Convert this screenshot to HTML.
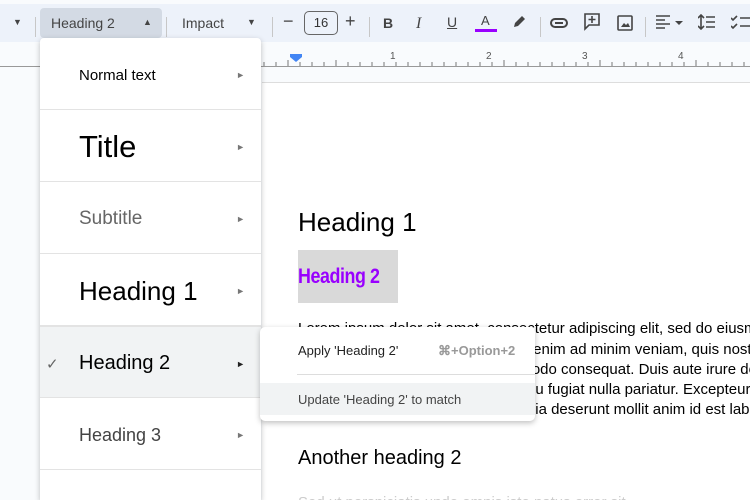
<!DOCTYPE html>
<html><head><meta charset="utf-8"><style>
*{margin:0;padding:0;box-sizing:border-box}
html,body{width:750px;height:500px;overflow:hidden}
body{background:#f9fbfd;font-family:"Liberation Sans",Arial,sans-serif;position:relative}
.abs{position:absolute}
.tb{left:0;top:4px;width:750px;height:38px;background:#edf2fa}
.page{left:262px;top:82px;width:488px;height:418px;background:#fff;border-top:1px solid #ddd;overflow:hidden}
.tbt{color:#444;font-size:14px}
.sep{width:1px;height:20px;background:#c7c7c7;top:13px}
.menu{left:40px;top:38px;width:221px;height:462px;background:#fff;box-shadow:0 2px 6px rgba(0,0,0,.25);border-radius:4px 4px 0 0;overflow:hidden}
.it{position:absolute;left:0;width:221px;height:72px;border-bottom:1px solid #e3e3e3;display:flex;align-items:center;padding-left:39px;padding-top:3px}
.arr{position:absolute;right:16px;font-size:9px;color:#777}
.sub{left:260px;top:327px;width:275px;height:94px;background:#fff;box-shadow:0 2px 6px rgba(0,0,0,.25);border-radius:5px}
.body{font-size:15px;color:#000;white-space:nowrap}
</style></head><body>
<div class="abs tb"></div>
<div class="abs tbt" style="left:13px;top:17px;font-size:9px">▼</div>
<div class="abs sep" style="left:35px;top:17px"></div>
<div class="abs" style="left:40px;top:8px;width:122px;height:30px;background:#d3dae4;border-radius:4px"></div>
<div class="abs tbt" style="left:51px;top:15px">Heading 2</div>
<div class="abs tbt" style="left:143px;top:17px;font-size:9px">▲</div>
<div class="abs sep" style="left:166px;top:17px"></div>
<div class="abs tbt" style="left:182px;top:15px">Impact</div>
<div class="abs tbt" style="left:247px;top:17px;font-size:9px">▼</div>
<div class="abs sep" style="left:272px;top:17px"></div>
<div class="abs tbt" style="left:283px;top:11px;font-size:18px">−</div>
<div class="abs" style="left:304px;top:11px;width:34px;height:24px;border:1px solid #666;border-radius:5px;font-size:13px;color:#333;text-align:center;line-height:22px">16</div>
<div class="abs tbt" style="left:345px;top:11px;font-size:18px">+</div>
<div class="abs sep" style="left:369px;top:17px"></div>
<div class="abs tbt" style="left:383px;top:15px;font-weight:bold">B</div>
<div class="abs tbt" style="left:416px;top:15px;font-style:italic;font-family:'Liberation Serif';font-size:16px">I</div>
<div class="abs tbt" style="left:447px;top:14px;text-decoration:underline">U</div>
<div class="abs tbt" style="left:481px;top:13px;font-size:13px">A</div>
<div class="abs" style="left:475px;top:29px;width:22px;height:3px;background:#9900ff"></div>
<svg class="abs" style="left:512px;top:13px" width="16" height="16"><path d="M2 14l1-4 7-7 3 3-7 7z" fill="#444"/></svg>
<div class="abs sep" style="left:540px;top:17px"></div>
<svg class="abs" style="left:550px;top:17px" width="18" height="12"><rect x="1" y="2" width="16" height="8" rx="4" fill="none" stroke="#444" stroke-width="2"/><rect x="5" y="5" width="8" height="2" fill="#444"/></svg>
<svg class="abs" style="left:584px;top:13px" width="16" height="18"><path d="M1 1h14v11H5l-4 4z" fill="none" stroke="#444" stroke-width="1.6"/><path d="M8 3v7M4.5 6.5h7" stroke="#444" stroke-width="1.6"/></svg>
<svg class="abs" style="left:617px;top:15px" width="16" height="16"><rect x="1" y="1" width="14" height="14" rx="1" fill="none" stroke="#444" stroke-width="1.6"/><path d="M4 12l3-4 2 2 2-2 2 4z" fill="#444"/></svg>
<div class="abs sep" style="left:645px;top:17px"></div>
<svg class="abs" style="left:656px;top:15px" width="30" height="14"><path d="M0 1h14M0 5h9M0 9h14M0 13h9" stroke="#444" stroke-width="1.6"/><path d="M19 6h8l-4 4z" fill="#444"/></svg>
<svg class="abs" style="left:698px;top:14px" width="18" height="16"><path d="M3 1v14M0 4l3-3 3 3M0 12l3 3 3-3M8 3h9M8 8h9M8 13h9" stroke="#444" stroke-width="1.6" fill="none"/></svg>
<svg class="abs" style="left:731px;top:14px" width="19" height="16"><path d="M0 4l2 2 4-4M0 12l2 2 4-4M9 4h10M9 12h10" stroke="#444" stroke-width="1.6" fill="none"/></svg>

<div class="abs" style="left:0;top:66px;width:750px;height:1px;background:#999"></div>
<svg class="abs" style="left:262px;top:43px" width="488" height="24">
<g stroke="#777" stroke-width="1">
<path d="M2 19v4M14 19v4M26 17v6M38 19v4M50 19v4M62 19v4M74 17v6M86 19v4M98 19v4M110 19v4M122 19v4M134 19v4M146 19v4M158 19v4M170 19v4M182 19v4M194 19v4M206 19v4M218 19v4M230 19v4M242 17v6M254 19v4M266 19v4M278 19v4M290 19v4M302 19v4M314 19v4M326 19v4M338 17v6M350 19v4M362 19v4M374 19v4M386 19v4M398 19v4M410 19v4M422 19v4M434 17v6M446 19v4M458 19v4M470 19v4M482 19v4"/>
</g>
<path d="M28 11h12v3l-6 5-6-5z" fill="#4285f4"/>
<g font-size="10" fill="#555" font-family="Liberation Sans"><text x="128" y="16">1</text><text x="224" y="16">2</text><text x="320" y="16">3</text><text x="416" y="16">4</text></g>
</svg>
<div class="abs page">
<div class="abs" style="left:36px;top:124px;font-size:26px">Heading 1</div>
<div class="abs" style="left:36px;top:167px;width:100px;height:53px;background:#d9d9d9"></div>
<div class="abs" style="left:36px;top:182px;font-weight:bold;font-size:21px;color:#9900ff;transform:scaleX(0.85);transform-origin:left;letter-spacing:-0.5px">Heading 2</div>
<div class="abs body" style="left:36px;top:237px">Lorem ipsum dolor sit amet, consectetur adipiscing elit, sed do eiusmod</div>
<div class="abs body" style="left:252px;top:258px">Ut enim ad minim veniam, quis nostrud</div>
<div class="abs body" style="left:229px;top:278px">commodo consequat. Duis aute irure dolor</div>
<div class="abs body" style="left:265px;top:298px">eu fugiat nulla pariatur. Excepteur sint</div>
<div class="abs body" style="left:246px;top:318px">officia deserunt mollit anim id est laborum.</div>
<div class="abs" style="left:36px;top:364px;font-size:20px">Another heading 2</div>
<div class="abs body" style="left:36px;top:411px;color:#ccc">Sed ut perspiciatis unde omnis iste natus error sit</div>
</div>

<div class="abs menu">
<div class="it" style="top:0;font-size:15px">Normal text<span class="arr">►</span></div>
<div class="it" style="top:72px;font-size:31px">Title<span class="arr">►</span></div>
<div class="it" style="top:144px;font-size:19px;color:#666">Subtitle<span class="arr">►</span></div>
<div class="it" style="top:216px;font-size:26px">Heading 1<span class="arr">►</span></div>
<div class="it" style="top:288px;font-size:20px;background:#f1f3f4;border-top:1px solid #e3e3e3"><span style="position:absolute;left:6px;color:#666;font-size:15px">✓</span>Heading 2<span class="arr" style="color:#222">►</span></div>
<div class="it" style="top:360px;font-size:18px;color:#434343">Heading 3<span class="arr">►</span></div>
</div>

<div class="abs sub">
<div class="abs" style="left:38px;top:16px;font-size:13px;color:#222">Apply 'Heading 2'</div>
<div class="abs" style="left:178px;top:16px;font-size:13px;color:#999;font-weight:bold">⌘+Option+2</div>
<div class="abs" style="left:37px;top:47px;width:238px;height:1px;background:#ddd"></div>
<div class="abs" style="left:0;top:56px;width:275px;height:32px;background:#f1f3f4"></div>
<div class="abs" style="left:38px;top:65px;font-size:13px;color:#444">Update 'Heading 2' to match</div>
</div>
</body></html>
